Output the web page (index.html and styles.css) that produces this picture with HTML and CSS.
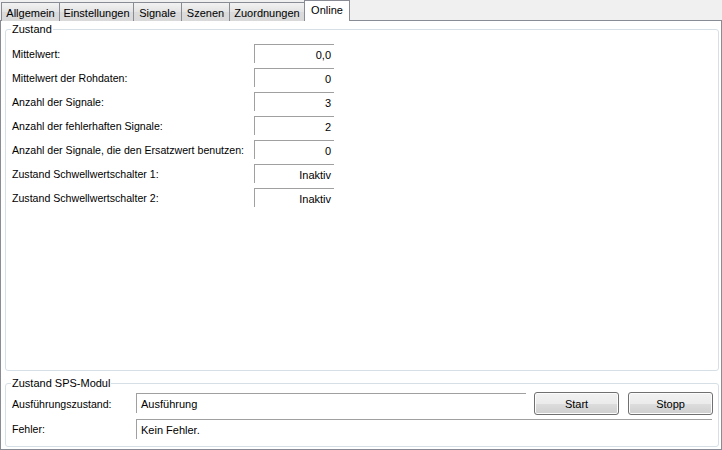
FILE: index.html
```html
<!DOCTYPE html>
<html lang="de">
<head>
<meta charset="utf-8">
<title>Online</title>
<link rel="stylesheet" href="styles.css">
</head>
<body>
<div class="window">
  <div class="tabs">
    <div class="tab w-allg">Allgemein</div>
    <div class="tab w-einst">Einstellungen</div>
    <div class="tab w-sig">Signale</div>
    <div class="tab w-sz">Szenen</div>
    <div class="tab w-zu">Zuordnungen</div>
    <div class="tab tab-active w-on">Online</div>
  </div>
  <div class="panel">
    <div class="group group-state">
      <div class="group-title">Zustand</div>
      <div class="state-grid">
        <div class="lbl">Mittelwert:</div><div class="val">0,0</div>
        <div class="lbl">Mittelwert der Rohdaten:</div><div class="val">0</div>
        <div class="lbl">Anzahl der Signale:</div><div class="val">3</div>
        <div class="lbl">Anzahl der fehlerhaften Signale:</div><div class="val">2</div>
        <div class="lbl">Anzahl der Signale, die den Ersatzwert benutzen:</div><div class="val">0</div>
        <div class="lbl">Zustand Schwellwertschalter 1:</div><div class="val">Inaktiv</div>
        <div class="lbl">Zustand Schwellwertschalter 2:</div><div class="val">Inaktiv</div>
      </div>
    </div>
    <div class="group group-sps">
      <div class="group-title">Zustand SPS-Modul</div>
      <div class="sps-grid">
        <div class="lbl">Ausführungszustand:</div>
        <div class="field field-run">Ausführung</div>
        <button class="btn">Start</button>
        <button class="btn btn-stop">Stopp</button>
        <div class="lbl">Fehler:</div>
        <div class="field field-err">Kein Fehler.</div>
      </div>
    </div>
  </div>
</div>
</body>
</html>
```

FILE: styles.css
```css
* { box-sizing: border-box; }
html, body {
  margin: 0;
  padding: 0;
  background: #f0f0f0;
  font-family: "Liberation Sans", Arial, sans-serif;
  font-size: 10.6px;
  color: #000;
}
.window {
  width: 722px;
  height: 450px;
}
.tabs {
  display: flex;
  align-items: flex-end;
  height: 21px;
  padding-left: 1px;
  font-size: 11px;
}
.tab {
  height: 19px;
  border: 1px solid #898c95;
  border-bottom: none;
  margin-right: -1px;
  background: linear-gradient(#f2f2f2, #e3e3e3 50%, #dbdbdb 51%, #d9d9d9);
  display: flex;
  align-items: center;
  justify-content: center;
  padding-top: 1px;
}
.tab-active {
  height: 21px;
  background: #fff;
  position: relative;
  z-index: 1;
  margin-right: 0;
  padding-top: 0;
  padding-bottom: 3px;
}
.w-allg { width: 59px; }
.w-einst { width: 75px; }
.w-sig { width: 49px; }
.w-sz { width: 49px; }
.w-zu { width: 76px; }
.w-on { width: 46px; }
.panel {
  margin-top: -1px;
  height: 430px;
  width: 722px;
  border: 1px solid #898c95;
  background: #fff;
  padding: 8px 2px 2px 4px;
  display: flex;
  flex-direction: column;
}
.group {
  position: relative;
  border: 1px solid #d5dfe5;
  border-radius: 3px;
}
.group-title {
  position: absolute;
  top: -8px;
  left: 5px;
  padding: 0 1px;
  background: #fff;
  line-height: 14px;
  font-size: 11px;
}
.group-state {
  height: 342px;
  padding: 14px 6px 0 6px;
}
.group-sps {
  margin-top: 12px;
  height: 64px;
  padding: 8px 5px 6px 6px;
}
.state-grid {
  display: grid;
  grid-template-columns: 242px 80px;
  grid-auto-rows: 19px;
  row-gap: 5px;
}
.lbl {
  display: flex;
  align-items: center;
  white-space: nowrap;
}
.val {
  border-top: 1px solid #a0a0a0;
  border-left: 1px solid #a0a0a0;
  display: flex;
  align-items: center;
  justify-content: flex-end;
  padding-right: 3px;
  padding-top: 1px;
  font-size: 11px;
}
.sps-grid {
  display: grid;
  grid-template-columns: 116px 1fr 85px 86px;
  grid-template-rows: 23px 20px;
  column-gap: 8px;
  row-gap: 4px;
}
.btn-stop { margin-left: 1px; }
.field {
  border-top: 1px solid #a0a0a0;
  border-left: 1px solid #a0a0a0;
  height: 20px;
  display: flex;
  align-items: center;
  padding-left: 4px;
  padding-top: 1px;
  font-size: 11px;
}
.field-run { margin-top: 1px; }
.field-err { grid-column: 2 / 5; margin-right: 1px; }
.btn {
  font: inherit;
  font-size: 11px;
  color: #000;
  height: 23px;
  border: 1px solid #707070;
  border-radius: 3px;
  background: linear-gradient(#f2f2f2, #ebebeb 50%, #dddddd 51%, #cfcfcf);
  box-shadow: inset 0 0 0 1px #fcfcfc;
  padding: 0;
}
```
